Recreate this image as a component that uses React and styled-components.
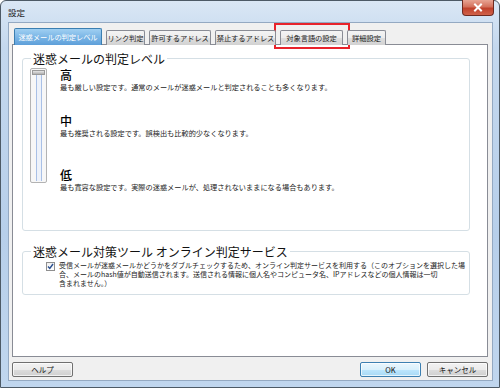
import styled, { createGlobalStyle } from "styled-components";

const GlobalStyle = createGlobalStyle`
  html, body {
    margin: 0;
    padding: 0;
    background: #ffffff;
  }
  body {
    font-family: "Noto Sans CJK JP", "Liberation Sans", sans-serif;
    color: #000;
  }
`;

const Window = styled.div`
  position: relative;
  width: 500px;
  height: 388px;
  box-sizing: border-box;
  border: 1px solid #4d5a66;
  border-radius: 6px 6px 0 0;
  background: linear-gradient(180deg, #dae7f5 0%, #c4d8ee 12%, #b7cfea 60%, #c0d6ee 100%);
  display: flex;
  flex-direction: column;
  padding: 0 6px 6px 7px;
`;

const TitleBar = styled.div`
  height: 21px;
  display: flex;
  align-items: center;
  font-size: 8.5px;
  color: #1a1a1a;
`;

const CloseButton = styled.div`
  position: absolute;
  top: -1px;
  right: 5px;
  width: 32px;
  height: 16px;
  box-sizing: border-box;
  border: 1px solid #6e2a20;
  border-top: none;
  border-radius: 0 0 4px 4px;
  background: linear-gradient(180deg, #e8a493 0%, #d4715c 45%, #c0412b 55%, #d0624a 100%);
  display: flex;
  align-items: center;
  justify-content: center;
`;

const Client = styled.div`
  flex: 1;
  background: #f0f0f0;
  border: 1px solid #94a9c2;
  display: flex;
  flex-direction: column;
  padding: 5px 4px 0 3px;
`;

const TabRow = styled.div`
  display: flex;
  align-items: flex-end;
  gap: 4px;
  padding-left: 2px;
  height: 17px;
  position: relative;
  z-index: 1;
  margin-bottom: -1px;
`;

const Tab = styled.div`
  width: ${(p) => p.$w}px;
  height: ${(p) => (p.$active ? "17px" : "15px")};
  box-sizing: border-box;
  border: 1px solid ${(p) => (p.$active ? "#3c7fb1" : "#898c95")};
  border-bottom: none;
  border-radius: 2px 2px 0 0;
  background: ${(p) =>
    p.$active
      ? "linear-gradient(180deg, #9fcff2 0%, #7bb6e6 50%, #5e9fd9 100%)"
      : "linear-gradient(180deg, #f4f4f4 0%, #ececec 50%, #dedede 51%, #d2d2d2 100%)"};
  color: ${(p) => (p.$active ? "#ffffff" : "#222")};
  font-size: 7.3px;
  line-height: ${(p) => (p.$active ? "16px" : "14px")};
  text-align: center;
  white-space: nowrap;
  letter-spacing: -0.1px;
`;

const Panel = styled.div`
  height: 313px;
  box-sizing: border-box;
  background: #ffffff;
  border: 1px solid #898c95;
  padding: 7px 17px 0 9px;
`;

const Group = styled.fieldset`
  margin: 0;
  padding: 0 0 0 7px;
  border: 1px solid #d5dfe5;
  border-radius: 3px;
  height: ${(p) => p.$h}px;
  box-sizing: border-box;
  margin-top: ${(p) => p.$top || 0}px;
`;

const Legend = styled.legend`
  font-size: 12px;
  line-height: 13px;
  padding: 0 2px;
  margin-left: 1px;
  color: #111;
`;

const LevelRow = styled.div`
  display: flex;
  gap: 13px;
  padding-top: 3px;
`;

const Track = styled.div`
  width: 17px;
  height: 115px;
  box-sizing: border-box;
  border: 1px solid #b3b3b3;
  border-radius: 2px;
  background: #f7f7f7;
  display: flex;
  flex-direction: column;
  align-items: center;
  padding: 1px 0;
`;

const Thumb = styled.div`
  width: 13px;
  height: 5px;
  box-sizing: border-box;
  border: 1px solid #9a9a9a;
  background: linear-gradient(180deg, #e6e6e6, #b0b0b0);
`;

const Rail = styled.div`
  flex: 1;
  width: 6px;
  box-sizing: border-box;
  border-left: 1px solid #a9c0e6;
  border-right: 1px solid #a9c0e6;
  background: #edf2fa;
`;

const Levels = styled.div`
  display: flex;
  flex-direction: column;
`;

const Level = styled.div`
  margin-top: ${(p) => p.$gap}px;
`;

const LevelTitle = styled.div`
  font-size: 12px;
  line-height: 14px;
  font-weight: 500;
`;

const Desc = styled.div`
  font-size: 7.2px;
  line-height: 10px;
  color: #222;
  white-space: nowrap;
`;

const CheckRow = styled.div`
  display: flex;
  gap: 4px;
  padding: 3px 0 0 16px;
`;

const CheckBox = styled.div`
  width: 9px;
  height: 9px;
  flex: none;
  margin-top: 1px;
  box-sizing: border-box;
  border: 1px solid #8f8f8f;
  background: linear-gradient(180deg, #f0f0f0, #ffffff);
  display: flex;
  align-items: center;
  justify-content: center;
`;

const CheckText = styled.div`
  font-size: 7px;
  line-height: 9px;
  color: #222;
  white-space: nowrap;
`;

const Footer = styled.div`
  display: flex;
  align-items: center;
  padding: 5px 0 0 0;
  gap: 6px;
`;

const Button = styled.div`
  width: 61px;
  height: 15px;
  box-sizing: border-box;
  border: 1px solid ${(p) => (p.$primary ? "#3c7fb1" : "#707070")};
  border-radius: 2px;
  background: ${(p) =>
    p.$primary
      ? "linear-gradient(180deg, #eaf6fd 0%, #d9f0fc 50%, #bee6fd 51%, #a7d9f5 100%)"
      : "linear-gradient(180deg, #f2f2f2 0%, #ebebeb 50%, #dddddd 51%, #cfcfcf 100%)"};
  box-shadow: inset 0 0 0 1px rgba(255, 255, 255, 0.7);
  font-size: 7.5px;
  line-height: 13px;
  text-align: center;
  color: #111;
`;

const Spacer = styled.div`
  flex: 1;
`;

const Highlight = styled.div`
  position: absolute;
  left: 273px;
  top: 22px;
  width: 76px;
  height: 26px;
  box-sizing: border-box;
  border: 2px solid #e8232b;
`;

const tabs = [
  { label: "迷惑メールの判定レベル", w: 88 },
  { label: "リンク判定", w: 39 },
  { label: "許可するアドレス", w: 62 },
  { label: "禁止するアドレス", w: 61 },
  { label: "対象言語の設定", w: 63 },
  { label: "詳細設定", w: 39 },
];

const levels = [
  { title: "高", gap: 0, desc: "最も厳しい設定です。通常のメールが迷惑メールと判定されることも多くなります。" },
  { title: "中", gap: 22, desc: "最も推奨される設定です。誤検出も比較的少なくなります。" },
  { title: "低", gap: 30, desc: "最も寛容な設定です。実際の迷惑メールが、処理されないままになる場合もあります。" },
];

export default function App() {
  return (
    <>
      <GlobalStyle />
      <Window>
        <TitleBar>設定</TitleBar>
        <CloseButton>
          <svg width="10" height="9" viewBox="0 0 10 9">
            <path d="M2 1.5 L8 7.5 M8 1.5 L2 7.5" stroke="#fff" strokeWidth="2" strokeLinecap="square" />
          </svg>
        </CloseButton>
        <Client>
          <TabRow>
            {tabs.map((t, i) => (
              <Tab key={t.label} $w={t.w} $active={i === 0}>
                {t.label}
              </Tab>
            ))}
          </TabRow>
          <Panel>
            <Group $h={179}>
              <Legend>迷惑メールの判定レベル</Legend>
              <LevelRow>
                <Track>
                  <Thumb />
                  <Rail />
                </Track>
                <Levels>
                  {levels.map((l) => (
                    <Level key={l.title} $gap={l.gap}>
                      <LevelTitle>{l.title}</LevelTitle>
                      <Desc>{l.desc}</Desc>
                    </Level>
                  ))}
                </Levels>
              </LevelRow>
            </Group>
            <Group $h={50} $top={14}>
              <Legend>迷惑メール対策ツール オンライン判定サービス</Legend>
              <CheckRow>
                <CheckBox>
                  <svg width="7" height="7" viewBox="0 0 7 7">
                    <path d="M1 3.5 L2.8 5.5 L6 1" stroke="#2a4f8f" strokeWidth="1.4" fill="none" />
                  </svg>
                </CheckBox>
                <CheckText>
                  受信メールが迷惑メールかどうかをダブルチェックするため、オンライン判定サービスを利用する（このオプションを選択した場
                  <br />
                  合、メールのhash値が自動送信されます。送信される情報に個人名やコンピュータ名、IPアドレスなどの個人情報は一切
                  <br />
                  含まれません。）
                </CheckText>
              </CheckRow>
            </Group>
          </Panel>
          <Footer>
            <Button>ヘルプ</Button>
            <Spacer />
            <Button $primary>OK</Button>
            <Button>キャンセル</Button>
          </Footer>
        </Client>
        <Highlight />
      </Window>
    </>
  );
}
